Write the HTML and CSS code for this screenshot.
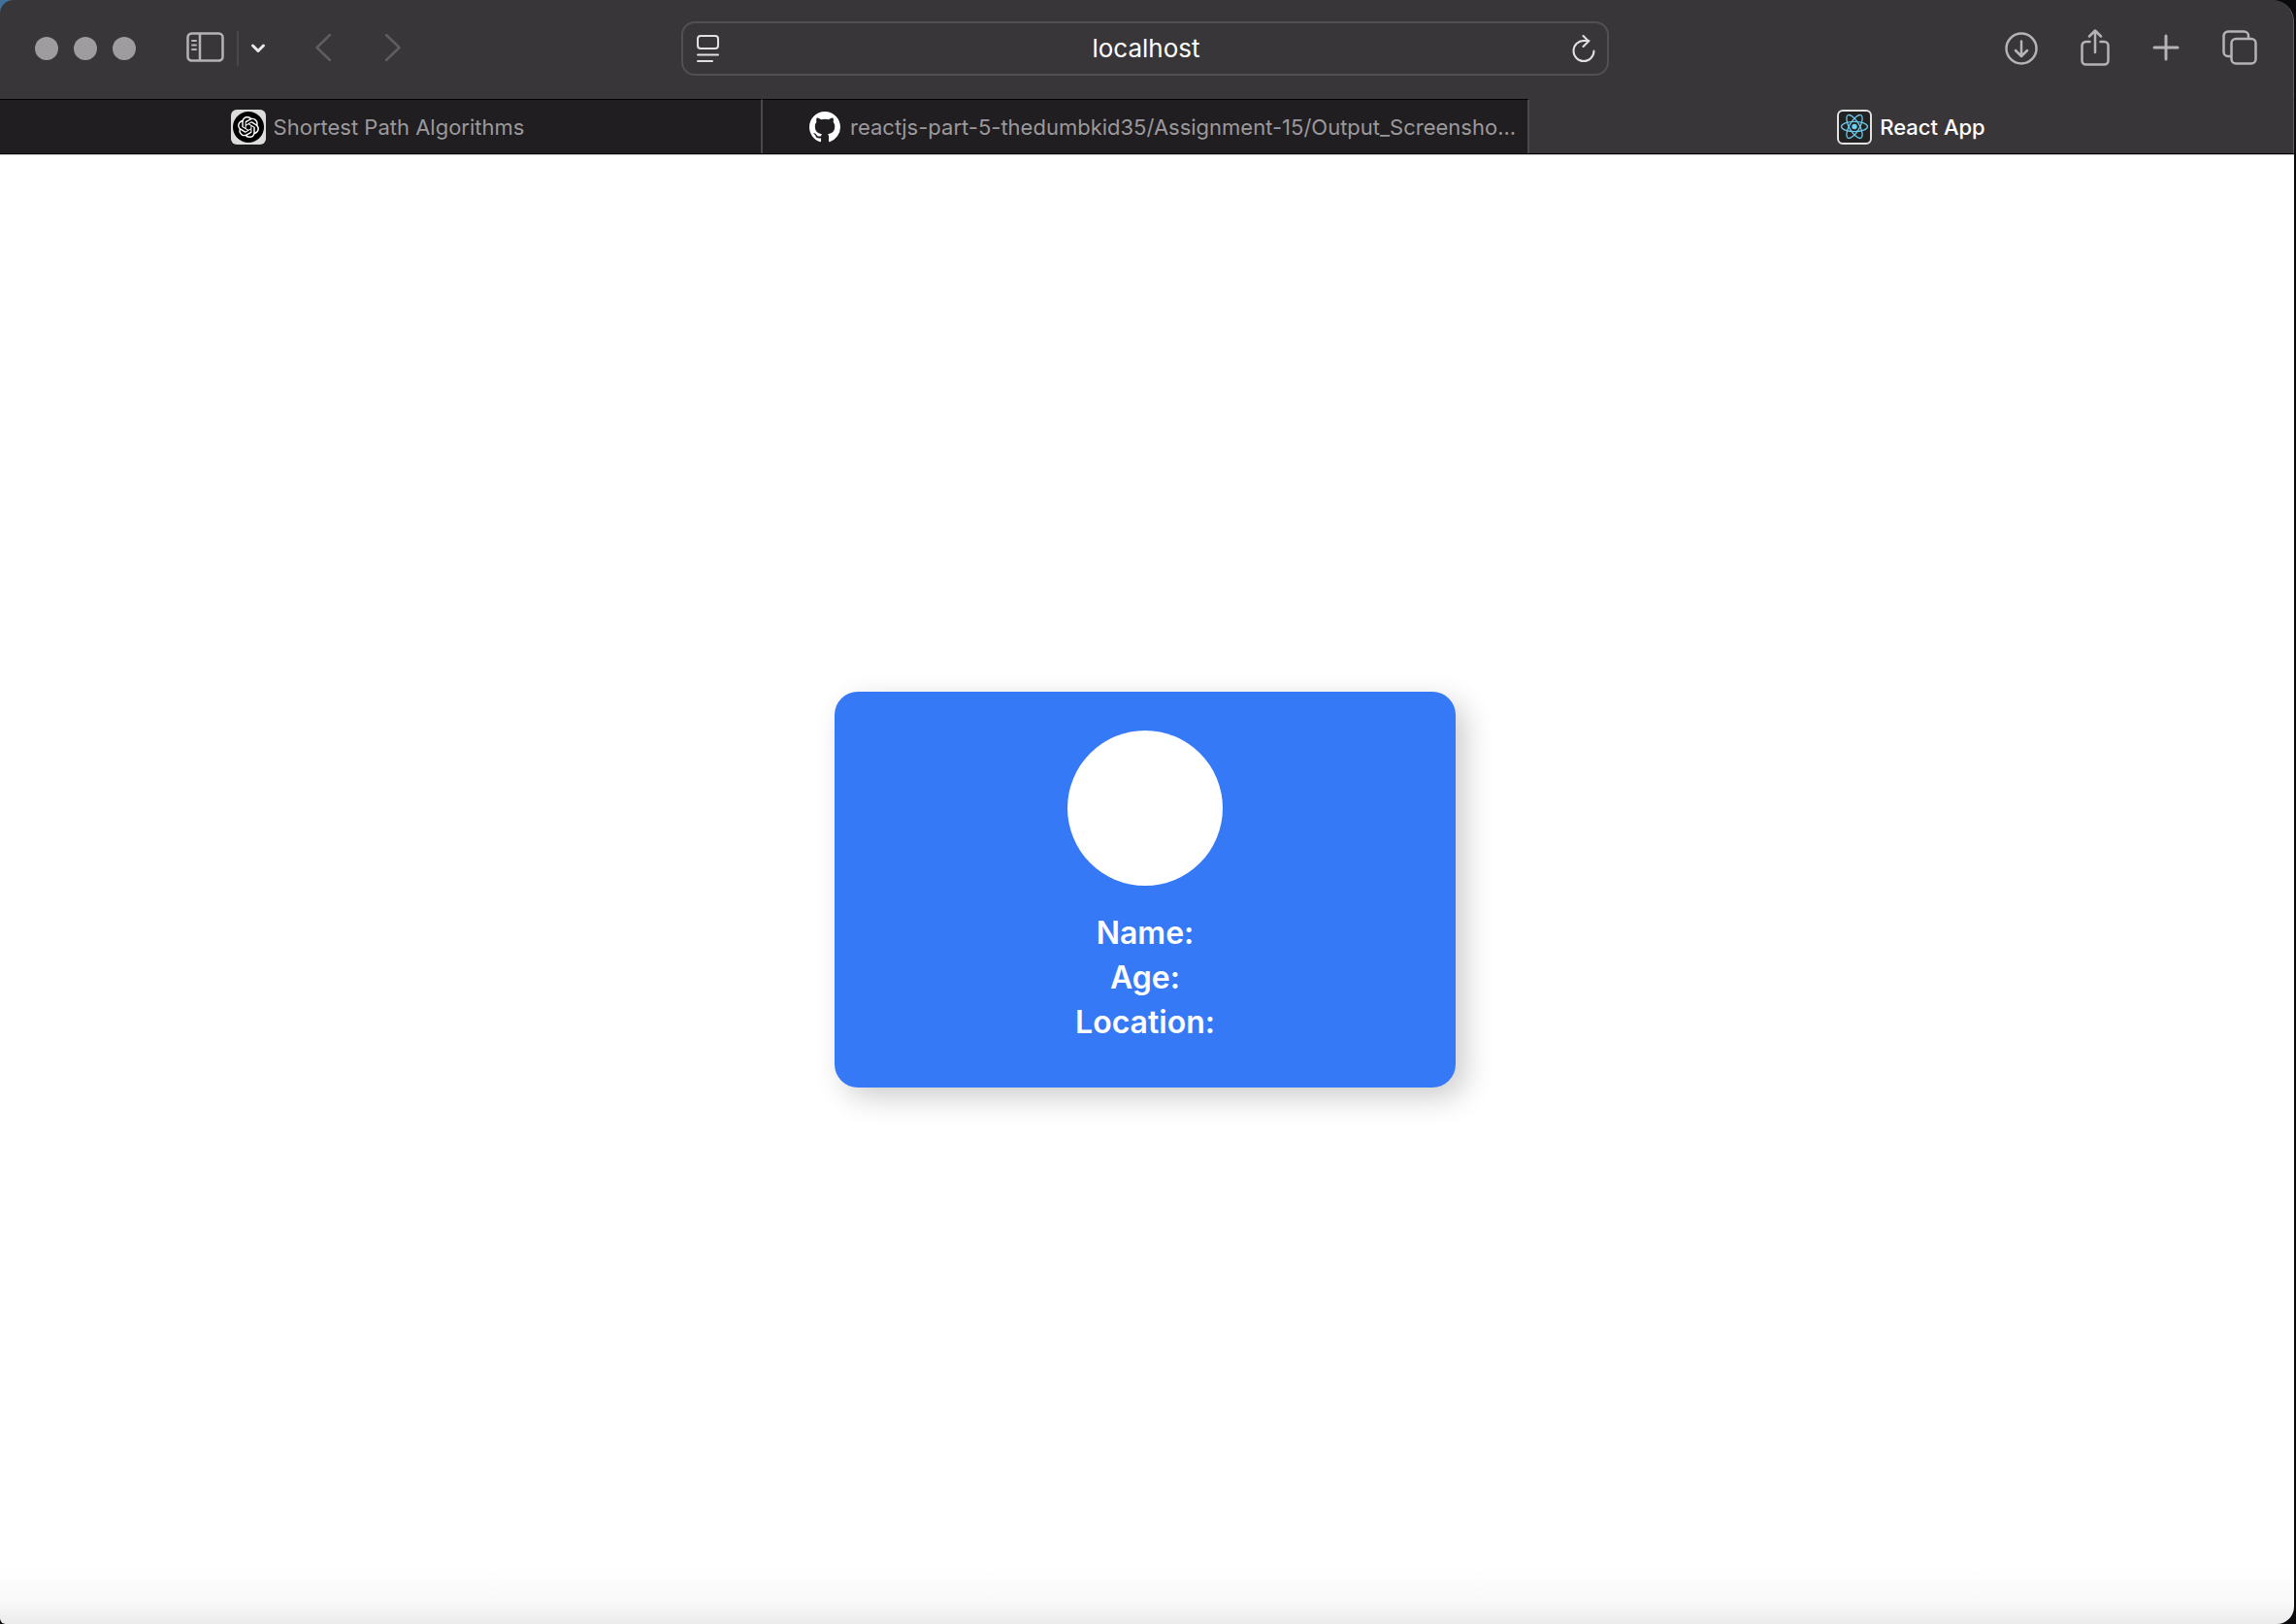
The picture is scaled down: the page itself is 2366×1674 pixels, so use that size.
FILE: index.html
```html
<!DOCTYPE html>
<html lang="en">
<head>
  <meta charset="utf-8">
  <meta name="viewport" content="width=device-width, initial-scale=1">
  <title>React App</title>
  <link rel="stylesheet" href="styles.css">
</head>
<body>
  <div class="window">
    <header class="toolbar">
      <div class="toolbar-start">
        <div class="lights">
          <button class="light" type="button" aria-label="Close"></button>
          <button class="light" type="button" aria-label="Minimize"></button>
          <button class="light" type="button" aria-label="Zoom"></button>
        </div>
        <button class="icon-button sidebar-button" type="button" aria-label="Show sidebar">
          <svg width="40" height="34" viewBox="0 0 40 34" fill="none" stroke="currentColor" stroke-width="2.500">
            <rect x="1.500" y="1.500" width="36" height="28" rx="4"/>
            <path d="M14 2v28"/>
            <path d="M6 9h4M6 13.500h4M6 18h4" stroke-width="2" stroke-linecap="round"/>
          </svg>
        </button>
        <span class="divider"></span>
        <button class="icon-button menu-button" type="button" aria-label="Tab groups">
          <svg width="16" height="12" viewBox="0 0 16 12" fill="none" stroke="currentColor" stroke-width="3" stroke-linecap="round" stroke-linejoin="round"><path d="M2.500 3 8 8.500 13.500 3"/></svg>
        </button>
        <div class="history">
          <button class="icon-button dim" type="button" aria-label="Back">
            <svg width="18" height="32" viewBox="0 0 18 32" fill="none" stroke="currentColor" stroke-width="2.500" stroke-linecap="round" stroke-linejoin="round"><path d="M16 2 2.500 15 16 28"/></svg>
          </button>
          <button class="icon-button dim" type="button" aria-label="Forward">
            <svg width="18" height="32" viewBox="0 0 18 32" fill="none" stroke="currentColor" stroke-width="2.500" stroke-linecap="round" stroke-linejoin="round"><path d="M2 2 15.500 15 2 28"/></svg>
          </button>
        </div>
      </div>
      <div class="address">
        <button class="icon-button bright" type="button" aria-label="Page menu">
          <svg width="24" height="28" viewBox="0 0 24 28" fill="none" stroke="currentColor" stroke-width="2" stroke-linecap="round"><rect x="1" y="1" width="21" height="13" rx="3"/><path d="M1 20.500h21M1 27h15"/></svg>
        </button>
        <input class="address-input" type="text" value="localhost" aria-label="Address">
        <button class="icon-button bright" type="button" aria-label="Reload">
          <svg width="24" height="28" viewBox="0 0 24 28" fill="none" stroke="currentColor" stroke-width="2" stroke-linecap="round" stroke-linejoin="round"><path d="M22.500 16.500A10.500 10.500 0 1 1 12 6h5.500M11.500 1l5.500 5.500-5.500 5.500"/></svg>
        </button>
      </div>
      <div class="toolbar-end">
        <button class="icon-button" type="button" aria-label="Downloads">
          <svg width="34" height="38" viewBox="0 0 34 38" fill="none" stroke="currentColor" stroke-width="2.500" stroke-linecap="round" stroke-linejoin="round"><circle cx="17" cy="20" r="15.500"/><path d="M17 12.500v15M11 22l6 6 6-6"/></svg>
        </button>
        <button class="icon-button" type="button" aria-label="Share">
          <svg width="30" height="38" viewBox="0 0 30 38" fill="none" stroke="currentColor" stroke-width="2.500" stroke-linecap="round" stroke-linejoin="round"><path d="M9.500 13H5.500a4 4 0 0 0-4 4v15.500a4 4 0 0 0 4 4h19a4 4 0 0 0 4-4V17a4 4 0 0 0-4-4h-4M15 24V2M9 7.500l6-6 6 6"/></svg>
        </button>
        <button class="icon-button" type="button" aria-label="New tab">
          <svg width="28" height="38" viewBox="0 0 28 38" fill="none" stroke="currentColor" stroke-width="3" stroke-linecap="round"><path d="M14 7v24M2 19h24"/></svg>
        </button>
        <button class="icon-button" type="button" aria-label="Tab overview">
          <svg width="36" height="38" viewBox="0 0 36 38" fill="none" stroke="currentColor" stroke-width="2.500"><path d="M9.500 28H6a4.500 4.500 0 0 1-4.500-4.500V7A4.500 4.500 0 0 1 6 2.500h16.500A4.500 4.500 0 0 1 27 7v3"/><rect x="9.500" y="10" width="25" height="25.500" rx="4.500"/></svg>
        </button>
      </div>
    </header>

    <nav class="tabs" aria-label="Tabs">
      <a class="tab" href="#shortest-path">
        <svg class="favicon" width="36" height="36" viewBox="0 0 36 36">
          <rect width="36" height="36" rx="6" fill="#dddddd"/>
          <circle cx="18" cy="18" r="16" fill="#000000"/>
          <path transform="translate(7 7) scale(.917)" fill="#ffffff" d="M22.2819 9.8211a5.9847 5.9847 0 0 0-.5157-4.9108 6.0462 6.0462 0 0 0-6.5098-2.9A6.0651 6.0651 0 0 0 4.9807 4.1818a5.9847 5.9847 0 0 0-3.9977 2.9 6.0462 6.0462 0 0 0 .7427 7.0966 5.98 5.98 0 0 0 .511 4.9107 6.051 6.051 0 0 0 6.5146 2.9001A5.9847 5.9847 0 0 0 13.2599 24a6.0557 6.0557 0 0 0 5.7718-4.2058 5.9894 5.9894 0 0 0 3.9977-2.9001 6.0557 6.0557 0 0 0-.7475-7.0729zm-9.022 12.6081a4.4755 4.4755 0 0 1-2.8764-1.0408l.1419-.0804 4.7783-2.7582a.7948.7948 0 0 0 .3927-.6813v-6.7369l2.02 1.1686a.071.071 0 0 1 .038.052v5.5826a4.504 4.504 0 0 1-4.4945 4.4944zm-9.6607-4.1254a4.4708 4.4708 0 0 1-.5346-3.0137l.142.0852 4.783 2.7582a.7712.7712 0 0 0 .7806 0l5.8428-3.3685v2.3324a.0804.0804 0 0 1-.0332.0615L9.74 19.9502a4.4992 4.4992 0 0 1-6.1408-1.6464zM2.3408 7.8956a4.485 4.485 0 0 1 2.3655-1.9728V11.6a.7664.7664 0 0 0 .3879.6765l5.8144 3.3543-2.0201 1.1685a.0757.0757 0 0 1-.071 0l-4.8303-2.7865A4.504 4.504 0 0 1 2.3408 7.872zm16.5963 3.8558L13.1038 8.364 15.1192 7.2a.0757.0757 0 0 1 .071 0l4.8303 2.7913a4.4944 4.4944 0 0 1-.6765 8.1042v-5.6772a.79.79 0 0 0-.407-.667zm2.0107-3.0231l-.142-.0852-4.7735-2.7818a.7759.7759 0 0 0-.7854 0L9.409 9.2297V6.8974a.0662.0662 0 0 1 .0284-.0615l4.8303-2.7866a4.4992 4.4992 0 0 1 6.6802 4.66zM8.3065 12.863l-2.02-1.1638a.0804.0804 0 0 1-.038-.0567V6.0742a4.4992 4.4992 0 0 1 7.3757-3.4537l-.142.0805L8.704 5.459a.7948.7948 0 0 0-.3927.6813zm1.0976-2.3654l2.602-1.4998 2.6069 1.4998v2.9994l-2.5974 1.4997-2.6067-1.4997Z"/>
        </svg>
        <span class="tab-title">Shortest Path Algorithms</span>
      </a>
      <a class="tab tab-wide" href="#reactjs-part-5">
        <svg class="favicon" width="36" height="36" viewBox="0 0 36 36">
          <path transform="translate(2 2) scale(2)" fill="#ffffff" d="M8 0C3.58 0 0 3.58 0 8c0 3.54 2.29 6.53 5.47 7.59.4.07.55-.17.55-.38 0-.19-.01-.82-.01-1.49-2.01.37-2.53-.49-2.69-.94-.09-.23-.48-.94-.82-1.13-.28-.15-.68-.52-.01-.53.63-.01 1.08.58 1.23.82.72 1.21 1.87.87 2.33.66.07-.52.28-.87.51-1.07-1.78-.2-3.64-.89-3.64-3.95 0-.87.31-1.59.82-2.15-.08-.2-.36-1.02.08-2.12 0 0 .67-.21 2.2.82.64-.18 1.32-.27 2-.27s1.36.09 2 .27c1.53-1.04 2.2-.82 2.2-.82.44 1.1.16 1.92.08 2.12.51.56.82 1.27.82 2.15 0 3.07-1.87 3.75-3.65 3.95.29.25.54.73.54 1.48 0 1.07-.01 1.93-.01 2.2 0 .21.15.46.55.38A8.01 8.01 0 0 0 16 8c0-4.42-3.58-8-8-8z"/>
        </svg>
        <span class="tab-title">reactjs-part-5-thedumbkid35/Assignment-15/Output_Screensho...</span>
      </a>
      <a class="tab tab-active" href="#react-app" aria-current="page">
        <svg class="favicon" width="36" height="36" viewBox="0 0 36 36">
          <rect x="1" y="1" width="34" height="34" rx="5" fill="#222222" stroke="#e0e0e0" stroke-width="2"/>
          <g fill="none" stroke="#6cc7e6" stroke-width="1.300">
            <ellipse cx="18" cy="17.500" rx="13.500" ry="5.200"/>
            <ellipse cx="18" cy="17.500" rx="13.500" ry="5.200" transform="rotate(60 18 17.500)"/>
            <ellipse cx="18" cy="17.500" rx="13.500" ry="5.200" transform="rotate(120 18 17.500)"/>
          </g>
          <circle cx="18" cy="17.500" r="2.700" fill="#6fd3f5"/>
        </svg>
        <span class="tab-title">React App</span>
      </a>
    </nav>

    <main class="page">
      <section class="card">
        <div class="avatar"></div>
        <div class="details">
          <p class="detail">Name:</p>
          <p class="detail">Age:</p>
          <p class="detail">Location:</p>
        </div>
      </section>
    </main>
  </div>
</body>
</html>
```

FILE: styles.css
```css
* {
  box-sizing: border-box;
}

body {
  margin: 0;
  padding-right: 2px;
  background: #0b0b0d linear-gradient(#3f7199, #3f7199) top left / 20px 20px no-repeat;
  font-family: Inter, "Liberation Sans", sans-serif;
}

button {
  padding: 0;
  border: 0;
  background: none;
  font: inherit;
}

.window {
  display: flex;
  flex-direction: column;
  min-height: 100vh;
  overflow: hidden;
  border-radius: 14px 22px 18px 6px;
  background: #39363a;
}

.toolbar {
  display: grid;
  grid-template-columns: 1fr 956px 1fr;
  grid-template-columns: 1fr 40.5% 1fr;
  align-items: center;
  height: 102px;
  padding: 0 3px 2px 0;
  border-right: 1px solid #5f5d60;
  border-top-right-radius: 22px;
}

.toolbar-start,
.toolbar-end,
.lights,
.history {
  display: flex;
  align-items: center;
}

.toolbar-start {
  padding-left: 36px;
}

.lights {
  gap: 16px;
}

.light {
  width: 24px;
  height: 24px;
  border-radius: 50%;
  background: #9f9c9f;
}

.icon-button {
  display: flex;
  flex: none;
  color: #b5b3b6;
}

.icon-button.dim {
  color: #5f5d60;
}

.icon-button.bright {
  color: #e2e1e2;
}

.sidebar-button {
  margin-left: 52px;
}

.divider {
  width: 2px;
  height: 36px;
  margin: 0 12px;
  background: #4a484c;
}

.icon-button.menu-button {
  color: #e9e8e9;
}

.history {
  gap: 54px;
  margin-left: 50px;
}

.address {
  display: flex;
  align-items: center;
  height: 56px;
  padding: 0 12px 0 14px;
  border: 2px solid #525054;
  border-radius: 14px;
}

.address-input {
  flex: 1;
  min-width: 0;
  padding: 0;
  border: 0;
  outline: 0;
  background: none;
  color: #ffffff;
  font: 400 26px/32px Inter, "Liberation Sans", sans-serif;
  text-align: center;
}

.toolbar-end {
  justify-content: flex-end;
  gap: 44px;
  padding: 0 34px 2px 0;
}

.tabs {
  display: grid;
  grid-template-columns: 786fr 790fr 788fr;
  height: 57px;
  border-bottom: 1px solid #000000;
}

.tab {
  display: flex;
  align-items: center;
  justify-content: center;
  gap: 8px;
  min-width: 0;
  padding-right: 6px;
  border-top: 1px solid #000000;
  border-right: 2px solid #4a484c;
  background: #201e21;
  color: #9b999c;
  font-size: 22px;
  line-height: 28px;
  text-decoration: none;
}

.tab-wide {
  justify-content: flex-start;
  padding: 0 2px 0 46px;
}

.tab-active {
  padding: 0;
  border-top-color: #39363a;
  border-right: 1px solid #5f5d60;
  background: #39363a;
  color: #ffffff;
  font-weight: 500;
}

.favicon {
  flex: none;
}

.tab-title {
  overflow: hidden;
  text-overflow: ellipsis;
  white-space: nowrap;
}

.page {
  display: flex;
  flex: 1;
  align-items: center;
  justify-content: center;
  padding-right: 4px;
  border-top: 1px solid #c9c8c9;
  background: linear-gradient(to top, #ececec, #f9f9f9 24px, #ffffff 60px);
}

.card {
  display: flex;
  flex-direction: column;
  align-items: center;
  gap: 26px;
  width: 640px;
  max-width: 100%;
  padding: 40px 40px 44px;
  border-radius: 24px;
  background: #3579f7;
  box-shadow: 10px 10px 30px rgba(0, 0, 0, 0.2);
}

.avatar {
  width: 160px;
  height: 160px;
  border-radius: 50%;
  background: #ffffff;
}

.details {
  color: #ffffff;
  font-size: 32px;
  font-weight: 600;
  line-height: 46px;
  text-align: center;
}

.detail {
  margin: 0;
}
```
